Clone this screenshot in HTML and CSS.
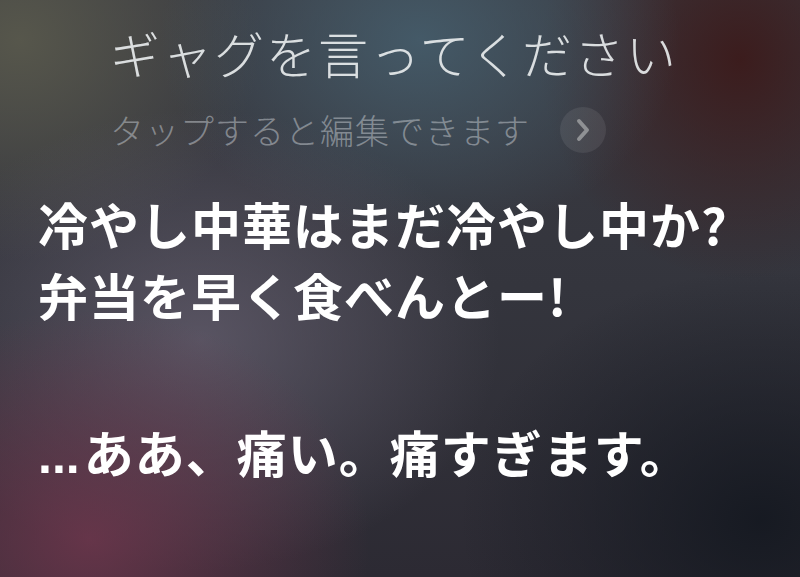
FILE: index.html
```html
<!DOCTYPE html>
<html lang="ja">
<head>
<meta charset="utf-8">
<link rel="stylesheet" href="styles.css">
</head>
<body>
<div class="screen">
  <div class="query">
    <div class="query-title">ギャグを言ってください</div>
    <div class="query-edit">
      <span class="edit-text">タップすると編集できます</span>
      <span class="edit-btn">
        <svg width="20" height="26" viewBox="0 0 20 26"><path d="M6 4 L14 13 L6 22" fill="none" stroke="#8f9194" stroke-width="4" stroke-linecap="round" stroke-linejoin="round"/></svg>
      </span>
    </div>
  </div>
  <div class="answer">
    <p class="answer-para">冷やし中華はまだ冷やし中か?<br>弁当を早く食べんとー!</p>
    <p class="answer-para"><span class="dots">...</span>ああ、痛い。痛すぎます。</p>
  </div>
</div>
</body>
</html>
```
FILE: styles.css
```css
html, body {
  margin: 0;
  padding: 0;
  width: 800px;
  height: 577px;
  overflow: hidden;
}
body {
  font-family: "Noto Sans CJK JP", "Noto Sans", sans-serif;
}
.screen {
  width: 800px;
  height: 577px;
  box-sizing: border-box;
  padding: 22px 0 0 38px;
  background:
    radial-gradient(ellipse 280px 230px at 90px 540px, rgba(115,55,78,0.8), rgba(115,55,78,0) 100%),
    radial-gradient(ellipse 300px 230px at 200px 340px, rgba(105,98,115,0.7), rgba(105,98,115,0) 100%),
    radial-gradient(ellipse 260px 200px at 420px 40px, rgba(70,95,110,0.85), rgba(70,95,110,0) 100%),
    radial-gradient(ellipse 200px 220px at 740px 60px, rgba(60,25,25,0.9), rgba(60,25,25,0) 100%),
    radial-gradient(ellipse 240px 220px at 20px 40px, rgba(88,88,76,0.95), rgba(88,88,76,0) 100%),
    radial-gradient(ellipse 300px 250px at 760px 520px, rgba(20,24,32,0.9), rgba(20,24,32,0) 100%),
    linear-gradient(180deg, #3a3b42 0%, #34353d 50%, #2c2a33 100%);
}
.query {
  padding-left: 72px;
}
.query-title {
  font-size: 50px;
  font-weight: 300;
  line-height: 60px;
  letter-spacing: 2px;
  color: rgba(235,238,240,0.9);
}
.query-edit {
  display: flex;
  align-items: center;
  margin-top: 25px;
  gap: 30px;
}
.edit-text {
  font-size: 34px;
  font-weight: 300;
  line-height: 46px;
  letter-spacing: 1px;
  color: rgba(200,205,210,0.5);
}
.edit-btn {
  width: 46px;
  height: 46px;
  border-radius: 50%;
  background: rgba(255,255,255,0.08);
  display: flex;
  align-items: center;
  justify-content: center;
}
.answer {
  margin-top: 35px;
}
.answer-para {
  margin: 0 0 86px 0;
  font-size: 50px;
  font-weight: 700;
  line-height: 71px;
  letter-spacing: 1px;
  color: #ffffff;
}
.dots {
  font-family: "Liberation Sans", sans-serif;
  letter-spacing: 0;
  margin-right: 4px;
}
```
